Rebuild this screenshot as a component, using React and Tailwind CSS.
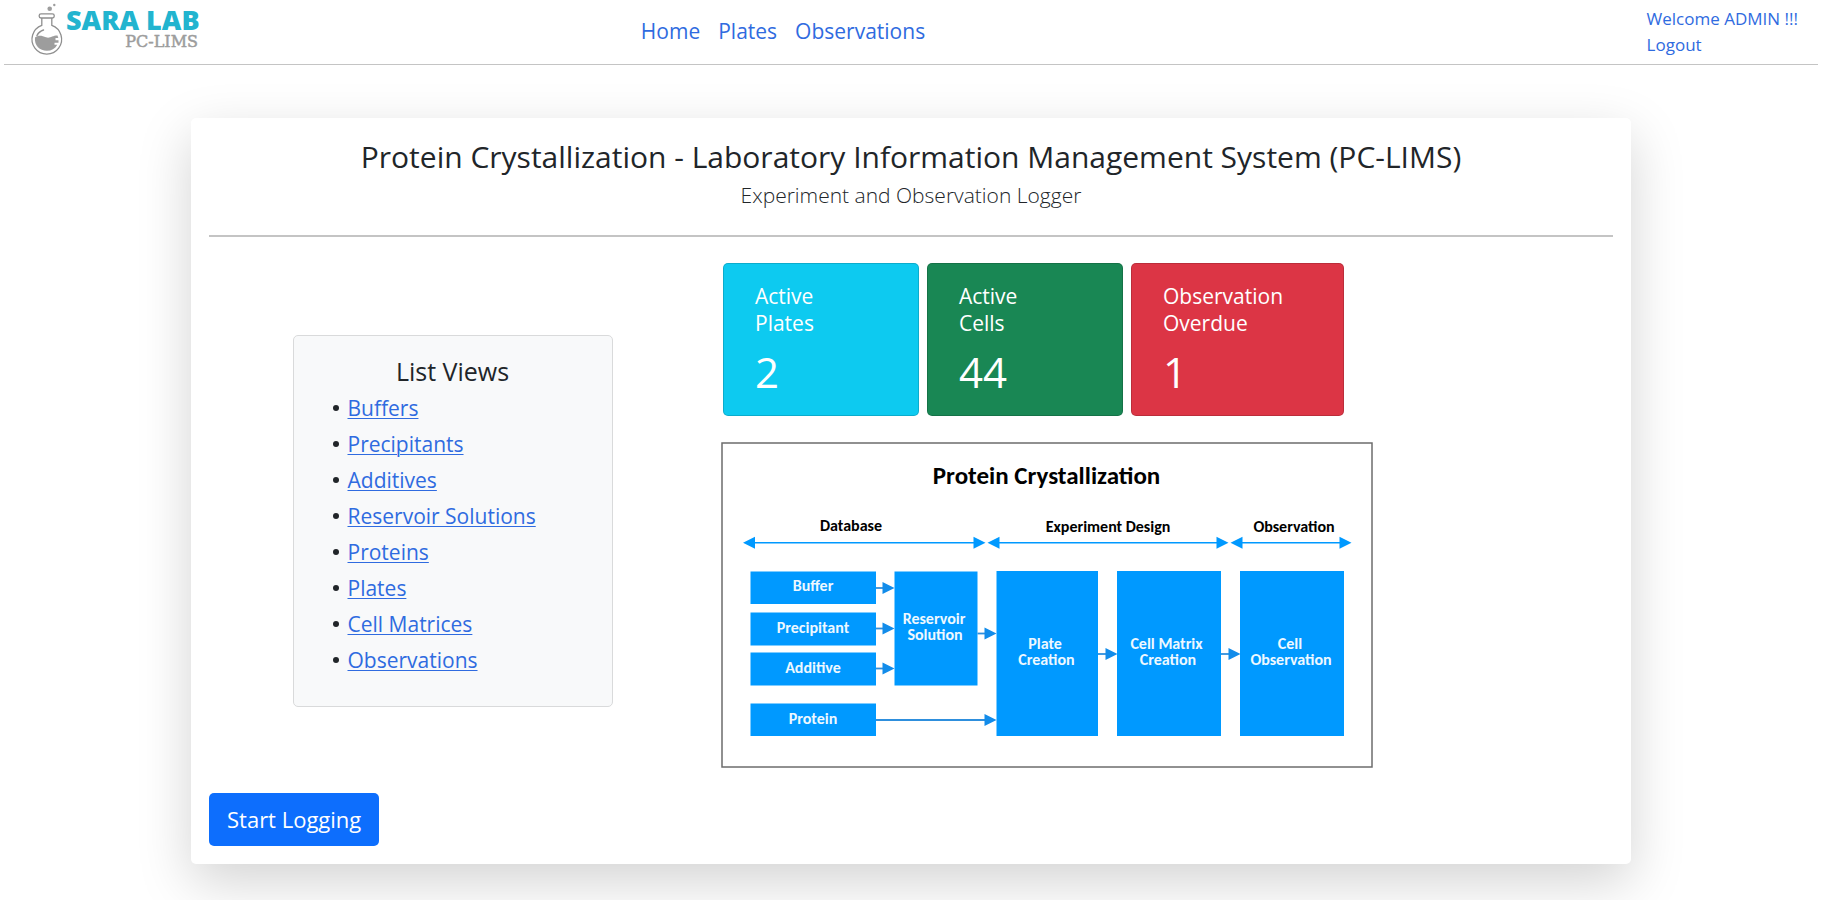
const NAV = ['Home', 'Plates', 'Observations'];

const LIST_VIEWS = [
  'Buffers',
  'Precipitants',
  'Additives',
  'Reservoir Solutions',
  'Proteins',
  'Plates',
  'Cell Matrices',
  'Observations',
];

const STATS = [
  { lines: ['Active', 'Plates'], value: 2, className: 'w-[196px] bg-[#0dcaf0]' },
  { lines: ['Active', 'Cells'], value: 44, className: 'w-[196px] bg-[#198754]' },
  { lines: ['Observation', 'Overdue'], value: 1, className: 'w-[213px] bg-[#dc3545]' },
];

const BOXES = [
  { x: 29.5, y: 129.5, w: 125.5, h: 32.5, lines: [['Buffer', 92, 149]] },
  { x: 29.5, y: 170.5, w: 125.5, h: 33, lines: [['Precipitant', 92, 191]] },
  { x: 29.5, y: 210.5, w: 125.5, h: 33, lines: [['Additive', 92, 231]] },
  { x: 29.5, y: 261.5, w: 125.5, h: 32.5, lines: [['Protein', 92, 282]] },
  { x: 173.5, y: 129.5, w: 83, h: 114, lines: [['Reservoir', 213, 182], ['Solution', 214, 198]] },
  { x: 275.5, y: 129, w: 101.5, h: 165, lines: [['Plate', 324, 207], ['Creation', 325.5, 223]] },
  { x: 396, y: 129, w: 104, h: 165, lines: [['Cell Matrix', 445.5, 207], ['Creation', 447, 223]] },
  { x: 519, y: 129, w: 104, h: 165, lines: [['Cell', 569, 207], ['Observation', 570, 223]] },
];

const ARROWS = [
  [155, 173.5, 146],
  [155, 173.5, 186.5],
  [155, 173.5, 226.5],
  [256.5, 275.5, 191.5],
  [155, 275.5, 278],
  [377, 396.5, 212],
  [500, 519.5, 212],
];

const SPANS = [
  [22, 264.5],
  [266.5, 507.5],
  [509.5, 630.5],
];

function Logo() {
  return (
    <a href="#home" aria-label="Sara Lab PC-LIMS" className="flex pl-6">
      <svg width="180" height="64" viewBox="0 0 180 64">
        <g fill="none" stroke="#8f8f8f" strokeWidth="1.300">
          <rect x="11.200" y="13.800" width="15" height="4.200" rx="1.800" />
          <path d="M13.800 18V25.400A14.800 14.800 0 1 0 23.800 25.400V18" />
          <path d="M9 35.500A10.500 10.500 0 0 1 15.500 30" strokeWidth="1.500" strokeLinecap="round" />
        </g>
        <path
          d="M7 37.500C10 34.800 14 35.500 18 37.300C22 38.800 24 35.500 29.500 35.500L30.300 38H27.500V40.300H30.500V42.800H26.500V44.800H29.300C27 48.800 23.500 50.800 18.800 50.800C12 50.800 6 45.500 7 37.500Z"
          fill="#9d9d9d"
        />
        <circle cx="21.700" cy="8.700" r="2.300" fill="#9d9d9d" />
        <circle cx="26.300" cy="5" r="1.200" fill="#9d9d9d" />
        <text x="38" y="30" fontSize="27" fontWeight="800" fill="#22b4cf" fontFamily="'Open Sans', sans-serif">SARA LAB</text>
        <text x="170" y="47" textAnchor="end" fontSize="16" fill="#9d9d9d" stroke="#9d9d9d" strokeWidth="0.500" fontFamily="'DejaVu Serif', serif">PC-LIMS</text>
      </svg>
    </a>
  );
}

function Diagram() {
  return (
    <svg
      viewBox="0 0 652 326"
      className="w-full max-w-[652px]"
      role="img"
      aria-label="Protein Crystallization"
      fontFamily="Carlito, Lato, sans-serif"
      fontWeight="700"
      textAnchor="middle"
    >
      <rect x="1" y="1" width="650" height="324" fill="#fff" stroke="#6c6c6c" strokeWidth="1.500" />
      <text x="325.500" y="42" fontSize="25">Protein Crystallization</text>
      <g fontSize="16">
        <text x="130" y="89">Database</text>
        <text x="387" y="90">Experiment Design</text>
        <text x="573" y="90">Observation</text>
      </g>
      {SPANS.map(([a, b]) => (
        <g key={a} fill="#0099ff">
          <path d={`M${a + 8} 100.700H${b - 8}`} stroke="#0099ff" strokeWidth="1.600" />
          <path d={`M${a} 100.700l12 -6v12zM${b} 100.700l-12 -6v12z`} />
        </g>
      ))}
      {BOXES.map((b) => (
        <g key={`${b.x}-${b.y}`}>
          <rect x={b.x} y={b.y} width={b.w} height={b.h} fill="#0099ff" />
          {b.lines.map(([text, x, y]) => (
            <text key={text} x={x} y={y} fontSize="16" fill="#eef8ff">{text}</text>
          ))}
        </g>
      ))}
      {ARROWS.map(([a, b, y]) => (
        <g key={`${a}-${y}`} fill="#128cea">
          <path d={`M${a} ${y}H${b - 8}`} stroke="#2e8fdd" strokeWidth="1.800" />
          <path d={`M${b} ${y}l-12 -6v12z`} />
        </g>
      ))}
    </svg>
  );
}

export default function App() {
  return (
    <div className="min-h-screen overflow-x-hidden bg-white pr-[10px] pl-1 font-['Open_Sans',sans-serif] text-[#212529]">
      <header className="grid grid-cols-[35.5%_1fr_auto] items-center border-b border-[#c4c4c4] pr-5">
        <Logo />
        <nav className="flex gap-[18px] pb-0.5 text-[21px] leading-8 text-[#2f6be0]">
          {NAV.map((item) => (
            <a key={item} href={`#${item.toLowerCase()}`}>{item}</a>
          ))}
        </nav>
        <div className="flex flex-col py-1.5 text-[17px] leading-[26px] text-[#2f6be0]">
          <a href="#profile">Welcome ADMIN !!!</a>
          <a href="#logout">Logout</a>
        </div>
      </header>

      <main className="mx-auto mt-[53px] max-w-[1440px] rounded-[5px] bg-white p-[18px] shadow-[0_18px_54px_rgba(0,0,0,0.175)]">
        <div className="border-b-2 border-[#c4c4c4] pb-[23px] text-center">
          <h1 className="text-[30px] leading-[42px]">
            Protein Crystallization - Laboratory Information Management System (PC-LIMS)
          </h1>
          <p className="text-[21px] leading-[34px] font-light">Experiment and Observation Logger</p>
        </div>

        <div className="flex items-center pt-[26px]">
          <div className="flex w-[512px] shrink-0 justify-center pt-2.5 pr-[25px]">
            <section className="w-80 rounded-[5px] border border-[#d9dadb] bg-[#f8f9fa] px-[18px] pt-4 pb-7">
              <h2 className="text-center text-[25px] leading-[38px]">List Views</h2>
              <ul className="pl-[21px] text-[21px] leading-9">
                {LIST_VIEWS.map((item) => (
                  <li
                    key={item}
                    className="flex items-center gap-[9px] before:size-1.5 before:rounded-full before:bg-[#212529] before:content-['']"
                  >
                    <a href={`#${item.toLowerCase().replace(' ', '-')}`} className="text-[#2f6be0] underline decoration-1 underline-offset-2">
                      {item}
                    </a>
                  </li>
                ))}
              </ul>
            </section>
          </div>

          <div className="flex min-w-0 flex-1 flex-col gap-[26px]">
            <div className="flex gap-2 pl-0.5">
              {STATS.map((s) => (
                <section key={s.lines.join(' ')} className={`rounded-[5px] border border-black/15 px-[31px] pt-[19px] pb-4 text-white ${s.className}`}>
                  <h2 className="text-[21px] leading-[27px]">
                    {s.lines[0]}
                    <br />
                    {s.lines[1]}
                  </h2>
                  <p className="pt-2 text-[42px] leading-[54px]">{s.value}</p>
                </section>
              ))}
            </div>
            <Diagram />
          </div>
        </div>

        <button type="button" className="mt-[25px] rounded-[5px] bg-[#0d6efd] px-[18px] py-2.5 text-[22px] leading-[33px] text-white">
          Start Logging
        </button>
      </main>
    </div>
  );
}
